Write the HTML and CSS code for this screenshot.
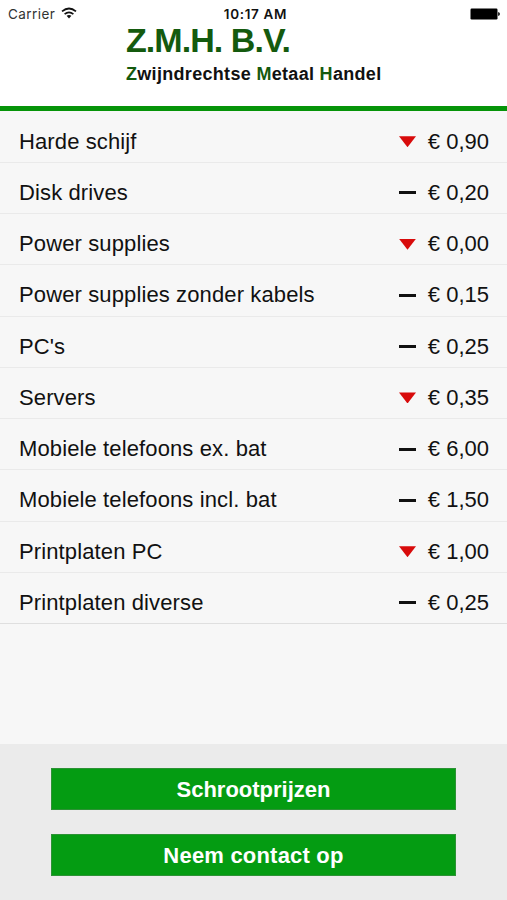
FILE: index.html
```html
<!DOCTYPE html>
<html lang="nl">
<head>
<meta charset="utf-8">
<title>Z.M.H. B.V.</title>
<link rel="stylesheet" href="styles.css">
</head>
<body>
<header class="header">
  <div class="status">
    <div class="carrier"><span>Carrier</span>
      <svg class="wifi" viewBox="0 0 16 12" width="16" height="12"><g fill="none" stroke="#111" stroke-width="1.7"><path d="M1 4.4Q8-1.4 15 4.4"/><path d="M3.6 7.2Q8 3.6 12.4 7.2"/></g><path d="M5.6 8.8Q8 7 10.4 8.8L8 11.4Z" fill="#111"/></svg>
    </div>
    <div class="clock">10:17 AM</div>
    <svg class="battery" viewBox="0 0 31 12" width="31" height="12"><rect x="0.5" y=".5" width="27" height="11" rx="1.2"/><path d="M28.2 4v4q1.7-.5 1.7-2t-1.7-2z"/></svg>
  </div>
  <div class="brand">
    <div class="name">Z.M.H. B.V.</div>
    <div class="tagline"><b>Z</b>wijndrechtse <b>M</b>etaal <b>H</b>andel</div>
  </div>
</header>
<main class="list">
  <div class="row"><span class="label">Harde schijf</span><i class="down"></i><span class="price">€ 0,90</span></div>
  <div class="row"><span class="label">Disk drives</span><i class="same"></i><span class="price">€ 0,20</span></div>
  <div class="row"><span class="label">Power supplies</span><i class="down"></i><span class="price">€ 0,00</span></div>
  <div class="row"><span class="label">Power supplies zonder kabels</span><i class="same"></i><span class="price">€ 0,15</span></div>
  <div class="row"><span class="label">PC's</span><i class="same"></i><span class="price">€ 0,25</span></div>
  <div class="row"><span class="label">Servers</span><i class="down"></i><span class="price">€ 0,35</span></div>
  <div class="row"><span class="label">Mobiele telefoons ex. bat</span><i class="same"></i><span class="price">€ 6,00</span></div>
  <div class="row"><span class="label">Mobiele telefoons incl. bat</span><i class="same"></i><span class="price">€ 1,50</span></div>
  <div class="row"><span class="label">Printplaten PC</span><i class="down"></i><span class="price">€ 1,00</span></div>
  <div class="row"><span class="label">Printplaten diverse</span><i class="same"></i><span class="price">€ 0,25</span></div>
</main>
<footer class="footer">
  <button class="btn">Schrootprijzen</button>
  <button class="btn contact">Neem contact op</button>
</footer>
</body>
</html>
```
FILE: styles.css
```css
* { box-sizing: border-box; }
body {
  margin: 0;
  height: 900px;
  display: flex;
  flex-direction: column;
  overflow: hidden;
  background: #f7f7f7;
  color: #111;
  font-family: "Liberation Sans", Arial, sans-serif;
}
.header {
  height: 111px;
  background: #fff;
  border-bottom: 5px solid #069409;
}
.status {
  height: 27px;
  padding: 0 6px 0 8px;
  display: grid;
  grid-template-columns: 1fr auto 1fr;
  align-items: center;
  font-family: Inter, "Liberation Sans", sans-serif;
  font-size: 13.5px;
}
.carrier { display: flex; align-items: center; gap: 6px; color: #333; }
.carrier span { letter-spacing: .45px; }
.wifi { margin-top: -2px; }
.clock { padding-left: 2px; font-weight: 600; letter-spacing: .65px; }
.battery { justify-self: end; }
.brand { padding-left: 126px; font-weight: bold; }
.name {
  height: 34px;
  line-height: 27px;
  font-size: 34px;
  letter-spacing: -.95px;
  color: #145a0e;
  white-space: nowrap;
}
.tagline {
  font-size: 18px;
  line-height: 26px;
  letter-spacing: .31px;
  white-space: nowrap;
}
.tagline b { color: #145a0e; }
.list { flex: 1; padding-top: .6px; }
.row {
  height: 51.25px;
  padding: 10px 18px 0 19px;
  display: flex;
  align-items: center;
  border-bottom: 1px solid #eaeaea;
  font-size: 22px;
}
.row:last-child { border-color: #dfdfdf; }
.label { flex: 1; letter-spacing: .12px; }
.price { width: 62px; text-align: right; white-space: nowrap; }
.down, .same { width: 17px; margin-right: 11px; }
.down {
  height: 11px;
  background: #d80b0b;
  clip-path: polygon(0 0, 100% 0, 50% 100%);
}
.same { height: 3px; background: #111; }
.footer {
  height: 156px;
  padding: 24px 51px;
  display: flex;
  flex-direction: column;
  gap: 24px;
  background: #ebebeb;
}
.btn {
  height: 42px;
  padding: 2px 0 0;
  border: 1px solid #2c9235;
  background: #049c12;
  color: #fff;
  font: bold 22px "Liberation Sans", Arial, sans-serif;
}
.contact { letter-spacing: .2px; }
```
